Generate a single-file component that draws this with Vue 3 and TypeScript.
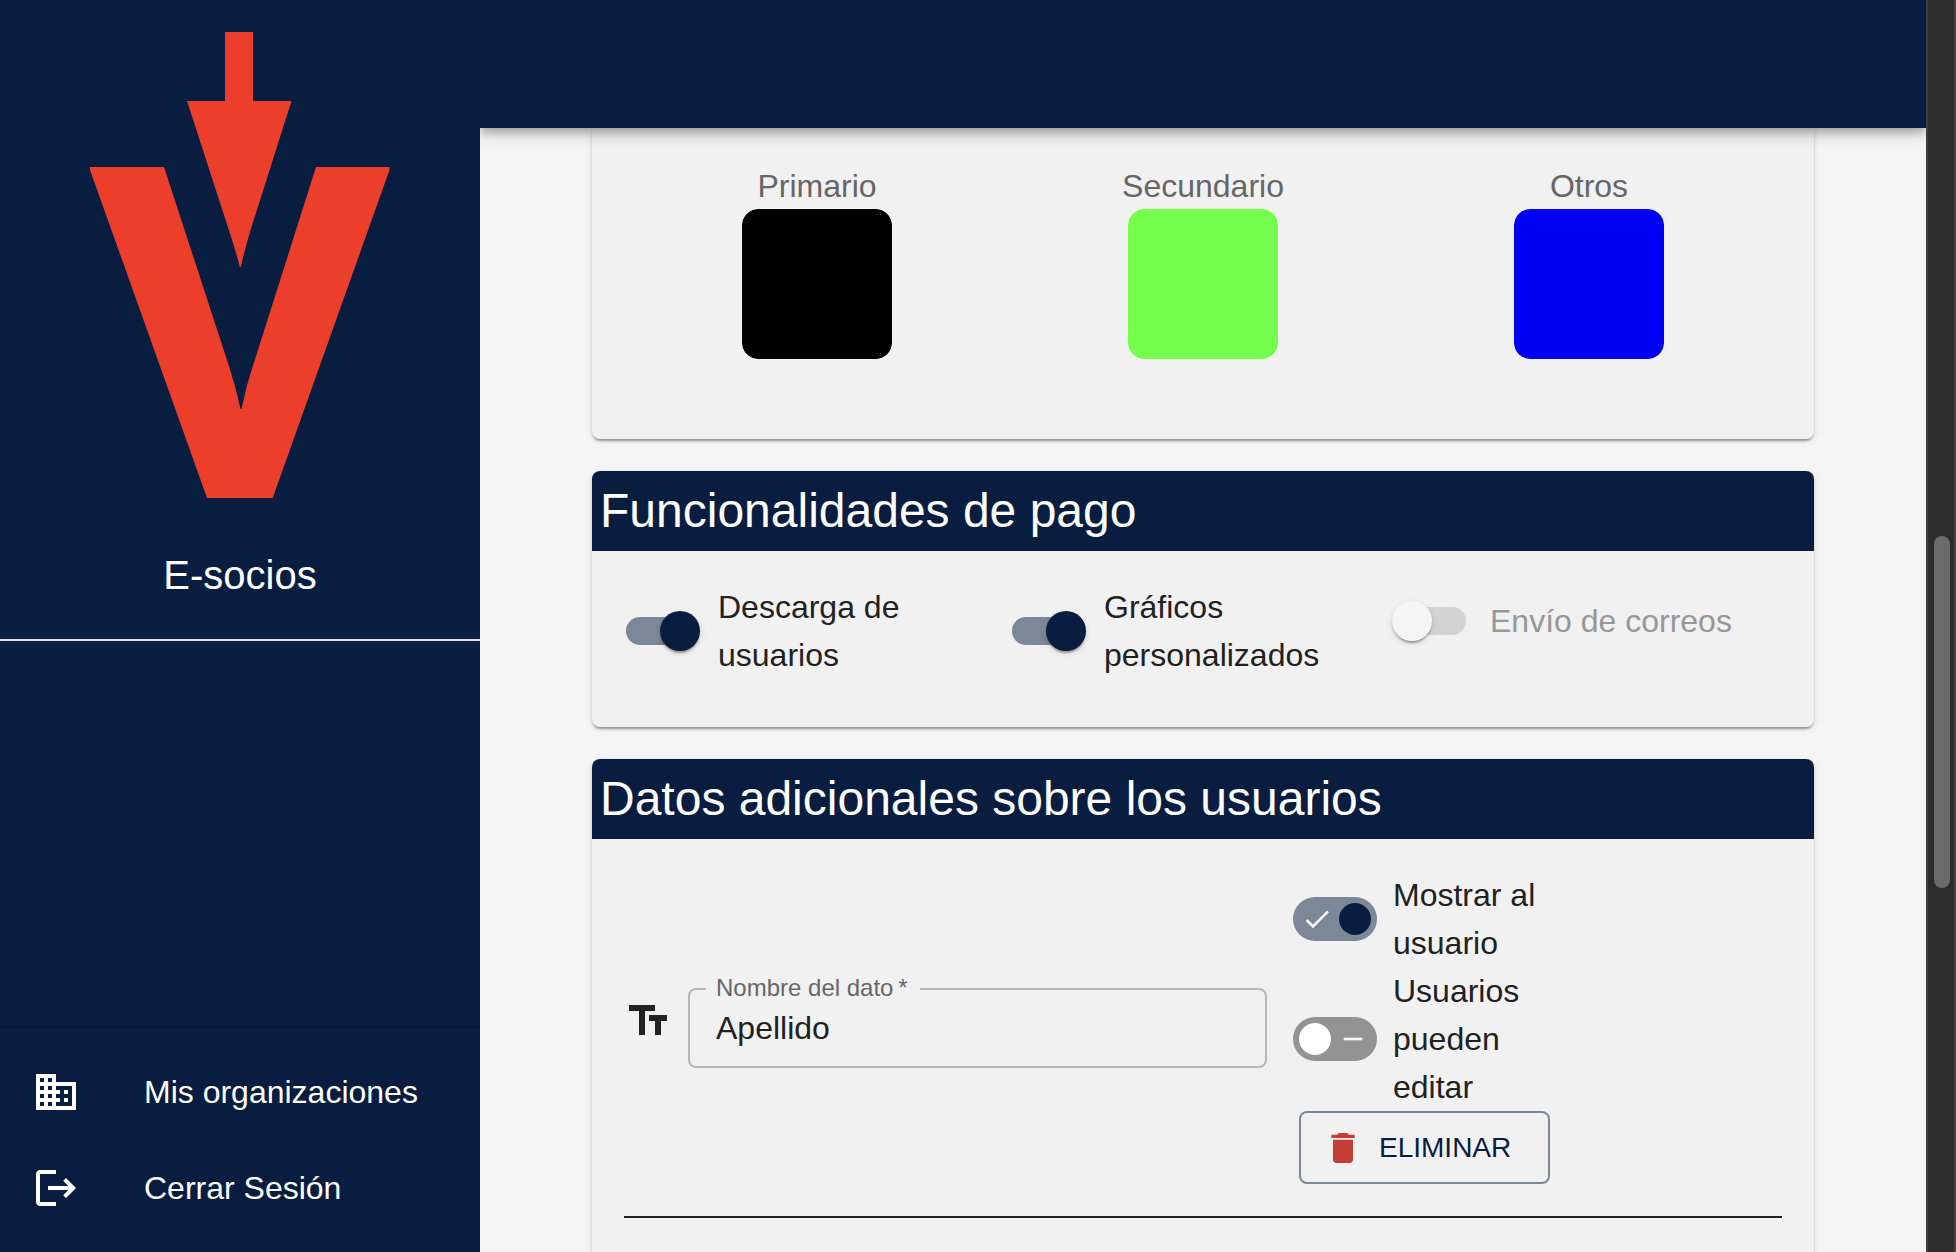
<script setup lang="ts">
import { ref } from 'vue'

interface Swatch {
  id: string
  label: string
  value: string
}

interface Feature {
  id: string
  label: string
  enabled: boolean
  disabled: boolean
}

interface Permission {
  id: string
  label: string
  enabled: boolean
}

const swatches = ref<Swatch[]>([
  { id: 'color-primary', label: 'Primario', value: '#000000' },
  { id: 'color-secondary', label: 'Secundario', value: '#75ff4c' },
  { id: 'color-other', label: 'Otros', value: '#0000f5' },
])

const features = ref<Feature[]>([
  { id: 'feature-download', label: 'Descarga de usuarios', enabled: true, disabled: false },
  { id: 'feature-charts', label: 'Gráficos personalizados', enabled: true, disabled: false },
  { id: 'feature-mail', label: 'Envío de correos', enabled: false, disabled: true },
])

const permissions = ref<Permission[]>([
  { id: 'perm-show', label: 'Mostrar al usuario', enabled: true },
  { id: 'perm-edit', label: 'Usuarios pueden editar', enabled: false },
])

const fieldName = ref('Apellido')
</script>

<template>
  <div class="shell">
    <aside class="sidebar">
      <div class="brand">
        <svg class="logo" viewBox="90 32 300 466" aria-hidden="true">
          <path d="M225 32h28v69h38.500L251.500 227Q245 248 240.800 267h-1Q235 248 228.500 229L187 101h38z" />
          <path d="M90 167h74L229.300 367Q236 388 240.500 409h1Q246 386 253.500 364L316 167h73.500v3L272.700 498H207L90 170z" />
        </svg>
        <p class="brand-name">E-socios</p>
      </div>
      <nav class="nav">
        <a class="nav-item" href="#organizaciones">
          <svg class="nav-icon" viewBox="0 0 24 24" aria-hidden="true">
            <path d="M12 7V3H2v18h20V7H12zM6 19H4v-2h2v2zm0-4H4v-2h2v2zm0-4H4V9h2v2zm0-4H4V5h2v2zm4 12H8v-2h2v2zm0-4H8v-2h2v2zm0-4H8V9h2v2zm0-4H8V5h2v2zm10 12h-8v-2h2v-2h-2v-2h2v-2h-2V9h8v10zm-2-8h-2v2h2v-2zm0 4h-2v2h2v-2z" />
          </svg>
          <span>Mis organizaciones</span>
        </a>
        <a class="nav-item" href="#salir">
          <svg class="nav-icon" viewBox="0 0 24 24" aria-hidden="true">
            <path d="M17 7l-1.410 1.410L18.170 11H8v2h10.170l-2.580 2.580L17 17l5-5zM4 5h8V3H4c-1.100 0-2 .9-2 2v14c0 1.100.9 2 2 2h8v-2H4V5z" />
          </svg>
          <span>Cerrar Sesión</span>
        </a>
      </nav>
    </aside>

    <div class="page">
      <header class="topbar"></header>
      <main class="content">
        <section class="card card-colors">
          <div class="swatches">
            <div v-for="swatch in swatches" :key="swatch.id" class="swatch">
              <label :for="swatch.id">{{ swatch.label }}</label>
              <input :id="swatch.id" v-model="swatch.value" type="color" />
            </div>
          </div>
        </section>

        <section class="card">
          <h2 class="card-title">Funcionalidades de pago</h2>
          <div class="features">
            <label
              v-for="feature in features"
              :key="feature.id"
              class="control"
              :class="{ 'is-disabled': feature.disabled }"
            >
              <span class="switch-box">
                <input
                  :id="feature.id"
                  v-model="feature.enabled"
                  class="switch"
                  type="checkbox"
                  :disabled="feature.disabled"
                />
              </span>
              <span>{{ feature.label }}</span>
            </label>
          </div>
        </section>

        <section class="card">
          <h2 class="card-title">Datos adicionales sobre los usuarios</h2>
          <div class="card-body">
            <div class="datum">
              <svg class="type-icon" viewBox="0 0 24 24" aria-hidden="true">
                <path d="M2.500 4v3h5v12h3V7h5V4h-13zm19 5h-9v3h3v7h3v-7h3V9z" />
              </svg>
              <div class="field">
                <label for="datum-name">Nombre del dato&#8201;*</label>
                <input id="datum-name" v-model="fieldName" type="text" required />
              </div>
              <div class="actions">
                <label v-for="perm in permissions" :key="perm.id" class="control">
                  <span class="pill-box">
                    <input :id="perm.id" v-model="perm.enabled" class="pill" type="checkbox" />
                    <svg v-if="perm.enabled" class="pill-mark mark-on" viewBox="0 0 24 24" aria-hidden="true">
                      <path d="M21 7L9 19l-5.500-5.500 1.410-1.410L9 16.170 19.590 5.590z" />
                    </svg>
                    <svg v-else class="pill-mark mark-off" viewBox="0 0 24 24" aria-hidden="true">
                      <path d="M19 13H5v-2h14z" />
                    </svg>
                  </span>
                  <span>{{ perm.label }}</span>
                </label>
                <button class="remove" type="button">
                  <svg viewBox="0 0 24 24" aria-hidden="true">
                    <path d="M6 19c0 1.100.9 2 2 2h8c1.100 0 2-.9 2-2V7H6v12zM19 4h-3.500l-1-1h-5l-1 1H5v2h14V4z" />
                  </svg>
                  <span>ELIMINAR</span>
                </button>
              </div>
            </div>
            <hr class="rule" />
          </div>
        </section>
      </main>
    </div>

    <div class="scrollbar" aria-hidden="true">
      <div class="scroll-thumb"></div>
    </div>
  </div>
</template>

<style>
body {
  margin: 0;
  background: #f5f5f5;
}
</style>

<style scoped>
.shell {
  --navy: #081d3f;
  --ink: #212121;
  --paper: #f1f1f1;
  display: flex;
  height: 100vh;
  overflow: hidden;
  background: #f5f5f5;
  color: var(--ink);
  font-family: "Liberation Sans", Arial, sans-serif;
  font-size: 32px;
  line-height: 48px;
}

.shell *,
.shell *::before {
  box-sizing: border-box;
}

.sidebar {
  position: relative;
  z-index: 2;
  display: flex;
  flex-direction: column;
  justify-content: space-between;
  flex: 0 0 480px;
  background: var(--navy);
  color: #fff;
}

.brand {
  display: flex;
  flex-direction: column;
  align-items: center;
  padding: 32px 0 34px;
  border-bottom: 2px solid #e8e2e9;
}

.logo {
  width: 300px;
  height: 466px;
  fill: #eb3f2b;
}

.brand-name {
  margin: 47px 0 0;
  font-size: 40px;
  line-height: 60px;
}

.nav {
  padding: 16px 0;
  border-top: 2px solid #071938;
}

.nav-item {
  display: flex;
  align-items: center;
  gap: 64px;
  height: 96px;
  padding: 0 32px;
  color: #fff;
  text-decoration: none;
}

.nav-icon {
  width: 48px;
  height: 48px;
  fill: #fff;
}

.page {
  display: flex;
  flex: 1;
  flex-direction: column;
  min-width: 0;
}

.topbar {
  position: relative;
  z-index: 1;
  flex: 0 0 128px;
  background: var(--navy);
  box-shadow:
    0 4px 8px -2px rgba(0, 0, 0, 0.2),
    0 8px 10px rgba(0, 0, 0, 0.14),
    0 2px 20px rgba(0, 0, 0, 0.12);
}

.content {
  display: flex;
  flex: 1;
  flex-direction: column;
  gap: 32px;
  min-height: 0;
  padding: 0 112px;
}

.card {
  flex: none;
  border-radius: 8px;
  background: var(--paper);
  box-shadow:
    0 4px 2px -2px rgba(0, 0, 0, 0.2),
    0 2px 2px rgba(0, 0, 0, 0.14),
    0 2px 6px rgba(0, 0, 0, 0.12);
}

.card-colors {
  padding: 35px 32px 80px;
  border-radius: 0 0 8px 8px;
}

.card-title {
  margin: 0;
  padding: 0 8px;
  border-radius: 8px 8px 0 0;
  background: var(--navy);
  color: #fff;
  font-size: 48px;
  font-weight: 400;
  line-height: 80px;
}

.swatches,
.features {
  display: grid;
  grid-template-columns: repeat(3, 1fr);
}

.features {
  align-items: start;
  padding: 32px 32px 48px;
}

.swatch {
  display: flex;
  flex-direction: column;
  align-items: center;
  color: #666;
  line-height: 46px;
}

.swatch input {
  width: 150px;
  height: 150px;
  padding: 0;
  overflow: hidden;
  border: 0;
  border-radius: 16px;
  background: none;
  appearance: none;
}

.swatch input::-webkit-color-swatch-wrapper {
  padding: 0;
}

.swatch input::-webkit-color-swatch {
  border: 0;
  border-radius: 16px;
}

.control {
  display: flex;
  align-items: center;
  margin-left: -22px;
}

.control.is-disabled {
  color: #979797;
}

.switch-box,
.pill-box {
  display: flex;
  flex: 0 0 116px;
  align-items: center;
  justify-content: center;
  height: 76px;
}

.switch {
  display: flex;
  align-items: center;
  width: 68px;
  height: 28px;
  margin: 0;
  border-radius: 14px;
  background: #9a9a9a;
  appearance: none;
}

.switch::before {
  flex: none;
  width: 40px;
  height: 40px;
  margin-left: -6px;
  border-radius: 50%;
  background: #f5f5f5;
  box-shadow:
    0 4px 2px -2px rgba(0, 0, 0, 0.2),
    0 2px 2px rgba(0, 0, 0, 0.14),
    0 2px 6px rgba(0, 0, 0, 0.12);
  content: "";
}

.switch:checked {
  background: #7c8797;
}

.switch:checked::before {
  margin-left: 34px;
  background: var(--navy);
}

.switch:disabled {
  background: #d3d3d3;
}

.card-body {
  padding: 32px 32px 64px;
}

.datum {
  display: flex;
  align-items: center;
}

.type-icon {
  flex: none;
  width: 48px;
  height: 48px;
  margin: 0 16px 14px 0;
  fill: var(--ink);
}

.field {
  position: relative;
  flex: 0 0 50%;
}

.field label {
  position: absolute;
  top: -14px;
  left: 18px;
  padding: 0 12px 0 10px;
  background: var(--paper);
  color: #666;
  font-size: 24px;
  line-height: 28px;
}

.field input {
  display: block;
  width: 100%;
  height: 80px;
  padding: 2px 26px 0;
  border: 2px solid #b7b7b7;
  border-radius: 8px;
  background: transparent;
  color: var(--ink);
  font: inherit;
}

.actions {
  width: 251px;
  margin-left: 32px;
}

.pill-box {
  position: relative;
}

.pill {
  display: flex;
  align-items: center;
  width: 84px;
  height: 44px;
  margin: 0;
  padding: 0 6px;
  border-radius: 22px;
  background: #939393;
  appearance: none;
}

.pill::before {
  width: 32px;
  height: 32px;
  border-radius: 50%;
  background: #fff;
  content: "";
}

.pill:checked {
  justify-content: flex-end;
  background: #7c8797;
}

.pill:checked::before {
  background: var(--navy);
}

.pill-mark {
  position: absolute;
  top: 22px;
  width: 32px;
  height: 32px;
  fill: #f5f5f5;
  pointer-events: none;
}

.mark-on {
  left: 24px;
}

.mark-off {
  right: 24px;
}

.remove {
  display: flex;
  align-items: center;
  gap: 16px;
  width: 100%;
  padding: 10px 22px;
  border: 2px solid #7c8797;
  border-radius: 8px;
  background: transparent;
  color: var(--navy);
  font: inherit;
  font-size: 28px;
  line-height: 49px;
}

.remove svg {
  width: 40px;
  height: 40px;
  fill: #c53c35;
}

.rule {
  height: 2px;
  margin: 32px 0 0;
  border: 0;
  background: var(--ink);
}

.scrollbar {
  position: relative;
  z-index: 2;
  flex: 0 0 30px;
  padding: 536px 4px 0 6px;
  border-right: 2px solid #474747;
  border-left: 2px solid #3d3d3d;
  background: #2c2c2c;
}

.scroll-thumb {
  height: 352px;
  border-radius: 8px;
  background: #6b6b6b;
}
</style>
